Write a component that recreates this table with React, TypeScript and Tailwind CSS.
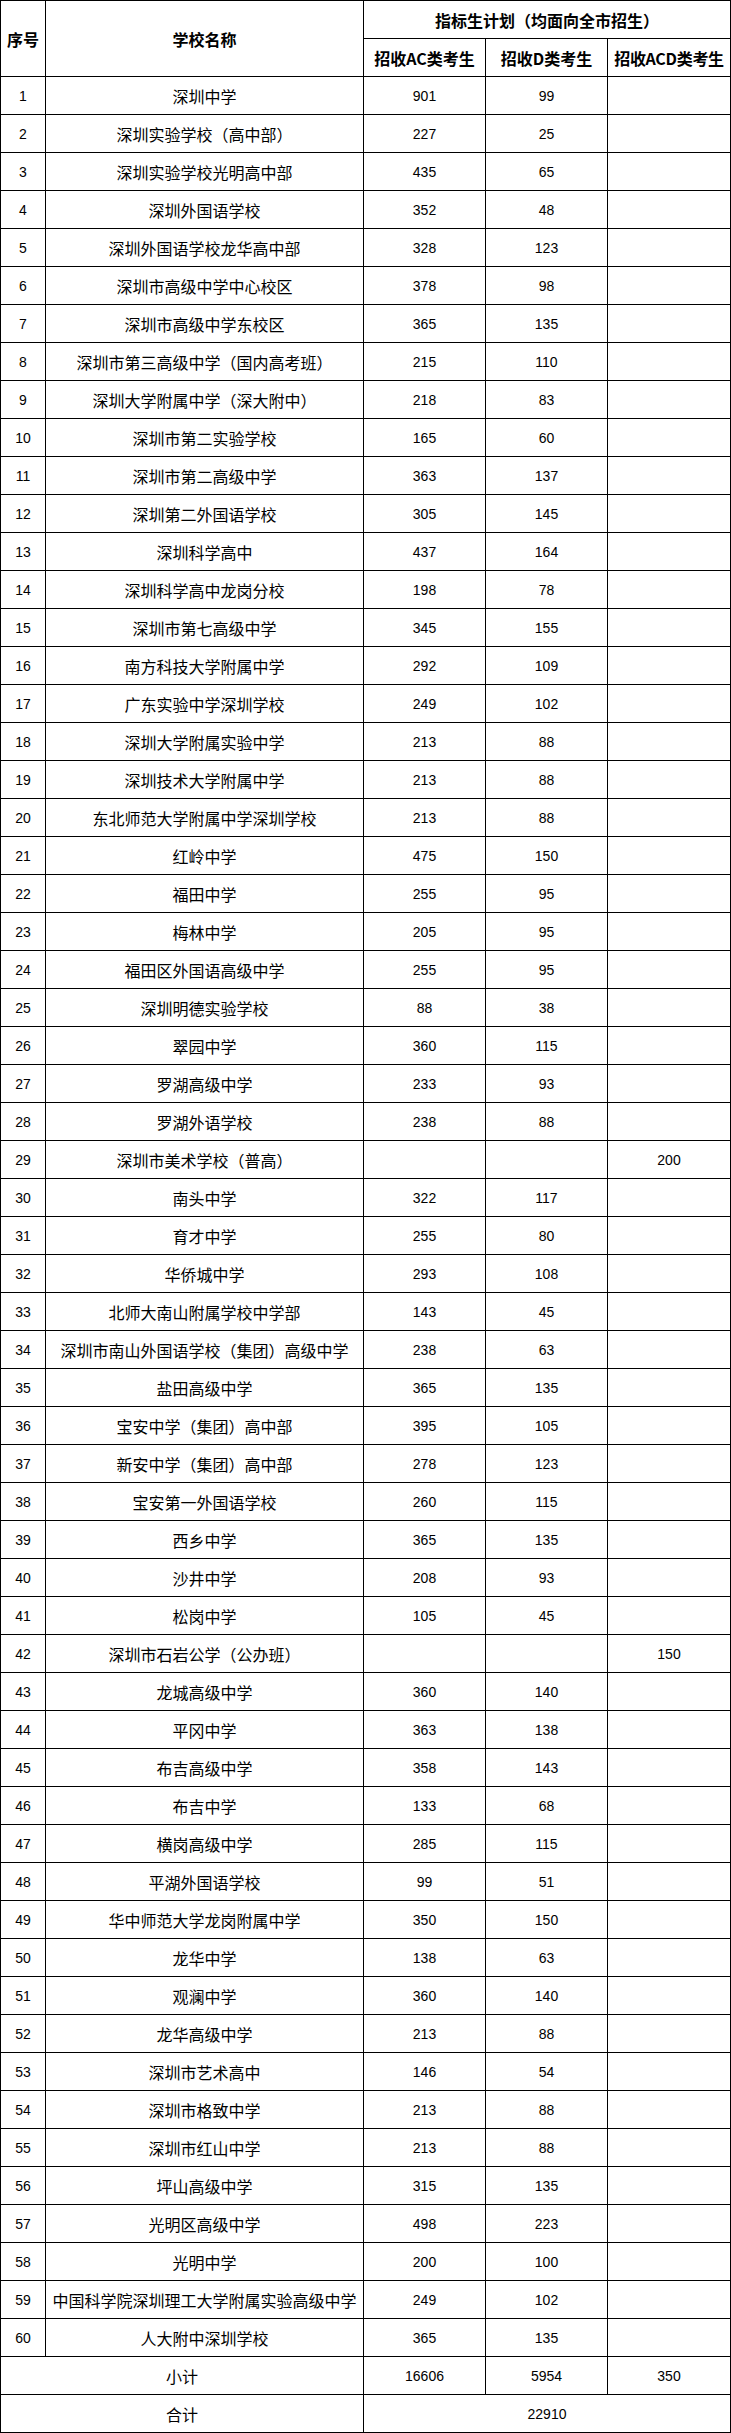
import React from "react";

const rows: [number, string, string, string, string][] = [
  [1, "深圳中学", "901", "99", ""],
  [2, "深圳实验学校（高中部）", "227", "25", ""],
  [3, "深圳实验学校光明高中部", "435", "65", ""],
  [4, "深圳外国语学校", "352", "48", ""],
  [5, "深圳外国语学校龙华高中部", "328", "123", ""],
  [6, "深圳市高级中学中心校区", "378", "98", ""],
  [7, "深圳市高级中学东校区", "365", "135", ""],
  [8, "深圳市第三高级中学（国内高考班）", "215", "110", ""],
  [9, "深圳大学附属中学（深大附中）", "218", "83", ""],
  [10, "深圳市第二实验学校", "165", "60", ""],
  [11, "深圳市第二高级中学", "363", "137", ""],
  [12, "深圳第二外国语学校", "305", "145", ""],
  [13, "深圳科学高中", "437", "164", ""],
  [14, "深圳科学高中龙岗分校", "198", "78", ""],
  [15, "深圳市第七高级中学", "345", "155", ""],
  [16, "南方科技大学附属中学", "292", "109", ""],
  [17, "广东实验中学深圳学校", "249", "102", ""],
  [18, "深圳大学附属实验中学", "213", "88", ""],
  [19, "深圳技术大学附属中学", "213", "88", ""],
  [20, "东北师范大学附属中学深圳学校", "213", "88", ""],
  [21, "红岭中学", "475", "150", ""],
  [22, "福田中学", "255", "95", ""],
  [23, "梅林中学", "205", "95", ""],
  [24, "福田区外国语高级中学", "255", "95", ""],
  [25, "深圳明德实验学校", "88", "38", ""],
  [26, "翠园中学", "360", "115", ""],
  [27, "罗湖高级中学", "233", "93", ""],
  [28, "罗湖外语学校", "238", "88", ""],
  [29, "深圳市美术学校（普高）", "", "", "200"],
  [30, "南头中学", "322", "117", ""],
  [31, "育才中学", "255", "80", ""],
  [32, "华侨城中学", "293", "108", ""],
  [33, "北师大南山附属学校中学部", "143", "45", ""],
  [34, "深圳市南山外国语学校（集团）高级中学", "238", "63", ""],
  [35, "盐田高级中学", "365", "135", ""],
  [36, "宝安中学（集团）高中部", "395", "105", ""],
  [37, "新安中学（集团）高中部", "278", "123", ""],
  [38, "宝安第一外国语学校", "260", "115", ""],
  [39, "西乡中学", "365", "135", ""],
  [40, "沙井中学", "208", "93", ""],
  [41, "松岗中学", "105", "45", ""],
  [42, "深圳市石岩公学（公办班）", "", "", "150"],
  [43, "龙城高级中学", "360", "140", ""],
  [44, "平冈中学", "363", "138", ""],
  [45, "布吉高级中学", "358", "143", ""],
  [46, "布吉中学", "133", "68", ""],
  [47, "横岗高级中学", "285", "115", ""],
  [48, "平湖外国语学校", "99", "51", ""],
  [49, "华中师范大学龙岗附属中学", "350", "150", ""],
  [50, "龙华中学", "138", "63", ""],
  [51, "观澜中学", "360", "140", ""],
  [52, "龙华高级中学", "213", "88", ""],
  [53, "深圳市艺术高中", "146", "54", ""],
  [54, "深圳市格致中学", "213", "88", ""],
  [55, "深圳市红山中学", "213", "88", ""],
  [56, "坪山高级中学", "315", "135", ""],
  [57, "光明区高级中学", "498", "223", ""],
  [58, "光明中学", "200", "100", ""],
  [59, "中国科学院深圳理工大学附属实验高级中学", "249", "102", ""],
  [60, "人大附中深圳学校", "365", "135", ""],
];

const cjk = "font-['Noto_Sans_CJK_SC','Noto_Sans_CJK_SC',sans-serif]";
const num = "font-['Liberation_Sans',Arial,sans-serif] text-[14px]";
const td = "border border-black text-center align-middle p-0 h-[38px]";

export default function App() {
  return (
    <div className="bg-white w-[731px] text-black">
      <table
        className={`border-collapse table-fixed w-[730px] ${cjk} text-[16px] leading-none`}
      >
        <colgroup>
          <col className="w-[45px]" />
          <col className="w-[318px]" />
          <col className="w-[122px]" />
          <col className="w-[122px]" />
          <col className="w-[123px]" />
        </colgroup>
        <thead>
          <tr>
            <th rowSpan={2} className={`${td} font-bold`}>序号</th>
            <th rowSpan={2} className={`${td} font-bold`}>学校名称</th>
            <th colSpan={3} className={`${td} font-bold`}>指标生计划（均面向全市招生）</th>
          </tr>
          <tr>
            <th className={`${td} font-bold`}>招收AC类考生</th>
            <th className={`${td} font-bold`}>招收D类考生</th>
            <th className={`${td} font-bold tracking-[-0.3px]`}>招收ACD类考生</th>
          </tr>
        </thead>
        <tbody>
          {rows.map(([n, name, ac, d, acd]) => (
            <tr key={n}>
              <td className={`${td} ${num}`}>{n}</td>
              <td className={`${td} whitespace-nowrap`}>{name}</td>
              <td className={`${td} ${num}`}>{ac}</td>
              <td className={`${td} ${num}`}>{d}</td>
              <td className={`${td} ${num}`}>{acd}</td>
            </tr>
          ))}
          <tr>
            <td colSpan={2} className={td}>小计</td>
            <td className={`${td} ${num}`}>16606</td>
            <td className={`${td} ${num}`}>5954</td>
            <td className={`${td} ${num}`}>350</td>
          </tr>
          <tr>
            <td colSpan={2} className={td}>合计</td>
            <td colSpan={3} className={`${td} ${num}`}>22910</td>
          </tr>
        </tbody>
      </table>
    </div>
  );
}
